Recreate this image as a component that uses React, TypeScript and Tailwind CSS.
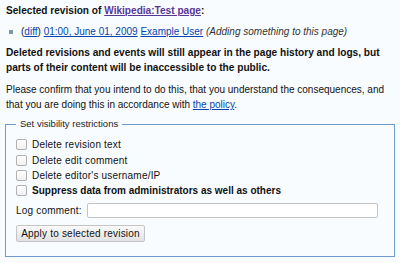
const font = { fontFamily: '"Liberation Sans", Arial, sans-serif' };

function Check({ label, bold }: { label: string; bold?: boolean }) {
  return (
    <div className="flex items-center h-[15.4px]">
      <span className="w-[11px] h-[11px] border border-[#b0b0b0] rounded-[2px] bg-gradient-to-b from-white to-[#f0f0f0] mr-[5px] shrink-0" />
      <span className={bold ? "font-bold" : "tracking-[0.2px]"}>{label}</span>
    </div>
  );
}

export default function App() {
  return (
    <div
      className="w-[400px] h-[263px] bg-[#f8fcff] text-[#111] text-[10px] leading-[15px] pl-[6px] pt-[3px] overflow-hidden"
      style={font}
    >
      <p className="font-bold text-[10.1px]">
        Selected revision of{" "}
        <a className="text-[#5a3696] underline">Wikipedia:Test page</a>:
      </p>
      <div className="flex items-center mt-[6px] ml-[3px]">
        <span className="w-[4px] h-[4px] bg-[#7a95b0] mr-[8px]" />
        <span>
          (<a className="text-[#0645ad] underline">diff</a>){" "}
          <a className="text-[#0645ad] underline">01:00, June 01, 2009</a>{" "}
          <a className="text-[#0645ad] underline">Example User</a>{" "}
          <i className="text-[#333]">(Adding something to this page)</i>
        </span>
      </div>
      <p className="font-bold text-[10.15px] mt-[6px] w-[385px]">
        Deleted revisions and events will still appear in the page history and logs, but
        parts of their content will be inaccessible to the public.
      </p>
      <p className="mt-[7px] w-[385px] text-[10px]">
        Please confirm that you intend to do this, that you understand the consequences, and
        that you are doing this in accordance with{" "}
        <a className="text-[#0645ad] underline">the policy</a>.
      </p>
      <fieldset className="border border-[#6f9ad0] w-[390px] -ml-[1px] mt-[6px] pl-[10px] pb-[14px] pt-0">
        <legend className="text-[9.5px] leading-[12px] px-[4px] text-[#222]">
          Set visibility restrictions
        </legend>
        <div className="mt-[7px]">
          <Check label="Delete revision text" />
          <Check label="Delete edit comment" />
          <Check label="Delete editor's username/IP" />
          <Check label="Suppress data from administrators as well as others" bold />
        </div>
        <div className="flex items-center mt-[4px]">
          <span className="mr-[5px] tracking-[0.2px]">Log comment:</span>
          <input className="w-[291px] h-[15px] border border-[#c4c4c4] rounded-[2px] bg-white" />
        </div>
        <button className="mt-[7px] h-[17px] w-[129px] border border-[#c4c4c4] rounded-[2px] bg-gradient-to-b from-[#fafafa] to-[#e2e2e2] text-[10px] leading-[15px] text-[#111] tracking-[0.2px]">
          Apply to selected revision
        </button>
      </fieldset>
    </div>
  );
}
